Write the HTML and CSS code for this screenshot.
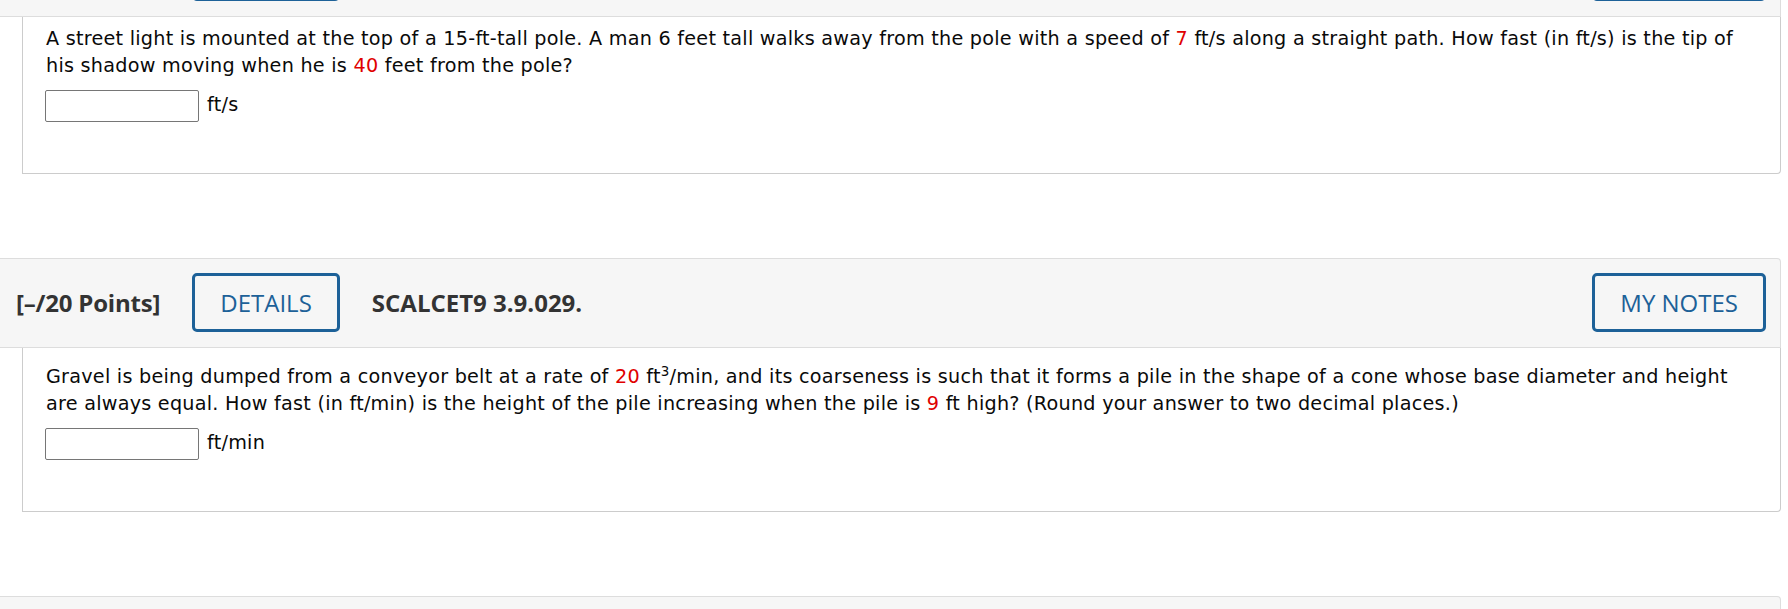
FILE: index.html
```html
<!DOCTYPE html>
<html lang="en">
<head>
<meta charset="utf-8">
<title>Questions</title>
<link rel="stylesheet" href="styles.css">
</head>
<body>
<div class="page">
  <section class="question question-prev">
    <div class="q-header">
      <span class="points">[–/20 Points]</span>
      <button class="btn">DETAILS</button>
      <span class="code">SCALCET9 3.9.028.</span>
      <button class="btn btn-notes">MY NOTES</button>
    </div>
    <div class="q-body">
      <p class="q-text">A street light is mounted at the top of a 15-ft-tall pole. A man 6 feet tall walks away from the pole with a speed of <span class="num">7</span> ft/s along a straight path. How fast (in ft/s) is the tip of his shadow moving when he is <span class="num">40</span> feet from the pole?</p>
      <div class="answer">
        <input class="answer-input" type="text" aria-label="answer">
        <span class="unit">ft/s</span>
      </div>
    </div>
  </section>

  <section class="question">
    <div class="q-header">
      <span class="points">[–/20 Points]</span>
      <button class="btn">DETAILS</button>
      <span class="code">SCALCET9 3.9.029.</span>
      <button class="btn btn-notes">MY NOTES</button>
    </div>
    <div class="q-body">
      <p class="q-text">Gravel is being dumped from a conveyor belt at a rate of <span class="num">20</span> ft<sup class="sup">3</sup>/min, and its coarseness is such that it forms a pile in the shape of a cone whose base diameter and height are always equal. How fast (in ft/min) is the height of the pile increasing when the pile is <span class="num">9</span> ft high? (Round your answer to two decimal places.)</p>
      <div class="answer">
        <input class="answer-input" type="text" aria-label="answer">
        <span class="unit">ft/min</span>
      </div>
    </div>
  </section>

  <section class="question">
    <div class="q-header">
      <span class="points">[–/20 Points]</span>
      <button class="btn">DETAILS</button>
      <span class="code">SCALCET9 3.9.030.</span>
      <button class="btn btn-notes">MY NOTES</button>
    </div>
  </section>
</div>
</body>
</html>
```

FILE: styles.css
```css
html, body {
  margin: 0;
  padding: 0;
  background: #ffffff;
}

.page {
  width: 1781px;
  display: flex;
  flex-direction: column;
  gap: 84px;
  font-family: "DejaVu Sans", Verdana, sans-serif;
  color: #0a0a0a;
}

.question-prev {
  margin-top: -73px;
}

.q-header {
  display: flex;
  align-items: center;
  gap: 32px;
  padding: 14px 14px 15px 16px;
  background: #f6f6f6;
  border: 1px solid #dddddd;
  border-left: none;
  border-top-right-radius: 4px;
  font-family: "Open Sans", "Liberation Sans", sans-serif;
  font-size: 24px;
  color: #333333;
}

.points {
  font-weight: 700;
  letter-spacing: -0.2px;
}

.code {
  font-weight: 700;
  letter-spacing: 0;
}

.btn {
  height: 59px;
  padding: 0 25px;
  background: transparent;
  border: 3px solid #1d6198;
  border-radius: 5px;
  color: #1d6198;
  font-family: inherit;
  font-size: 24px;
  font-weight: 400;
  cursor: pointer;
}

.btn-notes {
  margin-left: auto;
}

.q-body {
  margin-left: 22px;
  padding: 9px 23px 51px 23px;
  border: 1px solid #cccccc;
  border-top: none;
  border-bottom-right-radius: 4px;
  background: #ffffff;
  letter-spacing: 0.25px;
}

.q-text {
  margin: 0;
  font-size: 19.2px;
  line-height: 26.88px;
}

.num {
  color: #e00000;
}

.sup {
  font-size: 0.7em;
  line-height: 30px;
  vertical-align: super;
}

.answer {
  display: flex;
  align-items: center;
  gap: 8px;
  margin-top: 10px;
  font-size: 19.2px;
}

.answer-input {
  box-sizing: border-box;
  width: 154px;
  height: 32px;
  margin: 0 0 0 -1px;
  border: 1px solid #767676;
  border-radius: 2px;
  background: #ffffff;
}

.unit {
  line-height: 26.88px;
}
```
